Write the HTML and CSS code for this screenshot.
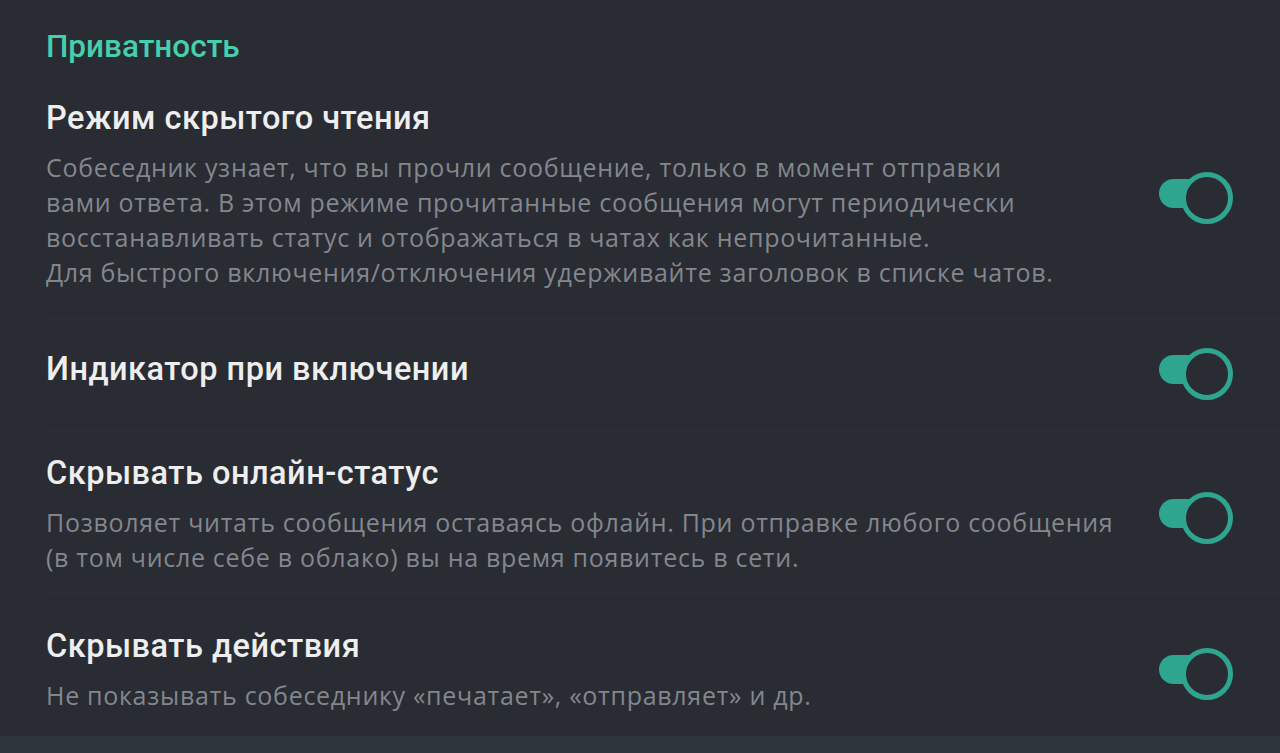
FILE: index.html
```html
<!doctype html>
<html lang="ru">
  <head>
    <meta charset="utf-8" />
    <title>Приватность</title>
    <meta name="viewport" content="width=device-width, initial-scale=1.0" />
    <link rel="stylesheet" href="styles.css">
  </head>
  <body>
    <div class="settings">
      <h2 class="section-title">Приватность</h2>

      <div class="option">
        <div class="option-text">
          <div class="option-title">Режим скрытого чтения</div>
          <p class="option-desc">
            Собеседник узнает, что вы прочли сообщение, только в момент отправки<br />
            вами ответа. В этом режиме прочитанные сообщения могут периодически<br />
            восстанавливать статус и отображаться в чатах как непрочитанные.<br />
            Для быстрого включения/отключения удерживайте заголовок в списке чатов.
          </p>
        </div>
        <span class="switch is-on"></span>
      </div>

      <div class="option option-single">
        <div class="option-text">
          <div class="option-title">Индикатор при включении</div>
        </div>
        <span class="switch is-on"></span>
      </div>

      <div class="option">
        <div class="option-text">
          <div class="option-title">Скрывать онлайн-статус</div>
          <p class="option-desc">
            Позволяет читать сообщения оставаясь офлайн. При отправке любого сообщения<br />
            (в том числе себе в облако) вы на время появитесь в сети.
          </p>
        </div>
        <span class="switch is-on"></span>
      </div>

      <div class="option">
        <div class="option-text">
          <div class="option-title">Скрывать действия</div>
          <p class="option-desc">
            Не показывать собеседнику «печатает», «отправляет» и др.
          </p>
        </div>
        <span class="switch is-on"></span>
      </div>
    </div>
    <div class="bottom-bar"></div>
  </body>
</html>
```

FILE: styles.css
```css
:root {
  --font-title: Roboto, "Noto Sans", sans-serif;
  --font-text: "Open Sans", Roboto, "Noto Sans", sans-serif;
  --color-bg: #292c33;
  --color-bar: #2e363d;
  --color-divider: #23262c;
  --color-title: #eeeeee;
  --color-desc: #83878d;
  --color-accent: #45cfad;
  --color-switch: #2ea58f;
}
* {
  margin: 0;
  padding: 0;
  box-sizing: border-box;
}
html,
body {
  height: 100vh;
  overflow: hidden;
}
body {
  display: flex;
  flex-direction: column;
  background: var(--color-bar);
  font-family: var(--font-title);
}
.settings {
  background: var(--color-bg);
  padding-top: 27px;
}
.bottom-bar {
  flex: 1;
  background: var(--color-bar);
}
.section-title {
  font-size: 31.5px;
  line-height: 40px;
  font-weight: 500;
  color: var(--color-accent);
  padding-left: 46px;
  margin-bottom: 4px;
}
.option {
  display: flex;
  align-items: center;
  margin-left: 46px;
  padding: 25px 47px 23px 0;
  border-bottom: 1px solid var(--color-divider);
}
.option:last-child {
  border-bottom: none;
}
.option-single {
  padding-top: 33px;
  padding-bottom: 34px;
}
.option-text {
  flex: 1;
  display: flex;
  flex-direction: column;
  gap: 10px;
}
.option-title {
  font-size: 32.5px;
  line-height: 44px;
  font-weight: 500;
  letter-spacing: 0.5px;
  color: var(--color-title);
}
.option-desc {
  font-family: var(--font-text);
  font-size: 25px;
  line-height: 35px;
  letter-spacing: 0.7px;
  color: var(--color-desc);
  white-space: nowrap;
}
.switch {
  position: relative;
  flex: none;
  width: 74px;
  height: 44px;
}
.switch::before {
  content: "";
  position: absolute;
  left: 0;
  top: 8px;
  width: 62px;
  height: 29px;
  border-radius: 15px;
  background: var(--color-switch);
}
.switch::after {
  content: "";
  position: absolute;
  right: 0;
  top: 1px;
  width: 42px;
  height: 42px;
  border-radius: 50%;
  border: 5px solid var(--color-switch);
  background: var(--color-bg);
}
```
